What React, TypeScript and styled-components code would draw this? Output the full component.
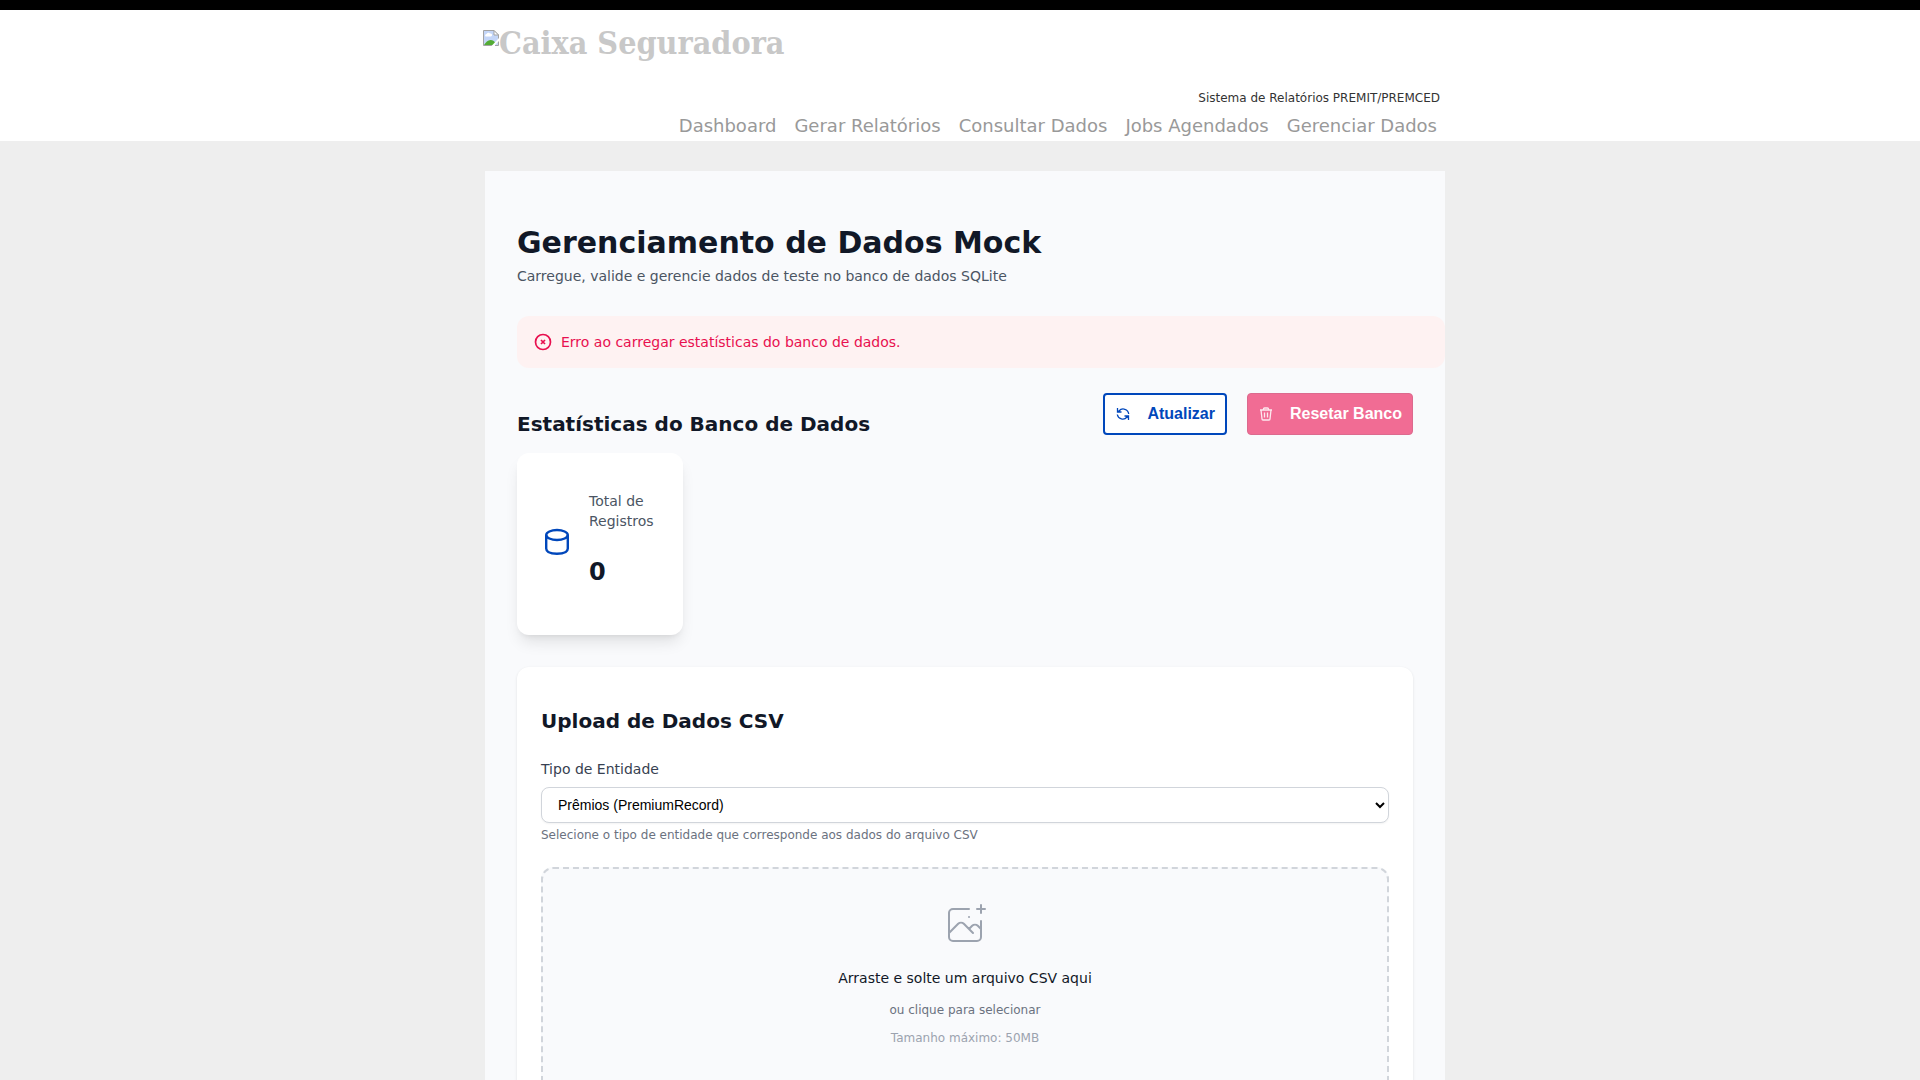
import React from "react";
import styled, { createGlobalStyle } from "styled-components";

const sans = '"DejaVu Sans", Verdana, sans-serif';
const arial = '"Liberation Sans", Arial, sans-serif';

const GlobalStyle = createGlobalStyle`
  * { box-sizing: border-box; }
  body { margin: 0; background: #eeeeee; color: #111827; font-family: ${sans}; font-size: 14px; line-height: 20px; }
  h1, h2, p { margin: 0; }
`;

const Header = styled.header`
  background: #ffffff;
  border-top: 10px solid #000000;
`;

const HeaderInner = styled.div`
  max-width: 960px;
  margin: 0 auto;
  padding: 16px 0 2px 3px;
  display: flex;
  flex-direction: column;
`;

const Logo = styled.a`
  display: flex;
  align-items: flex-start;
  align-self: flex-start;
  height: 56px;
  color: #c8c8c8;
  font: bold 32px/34px "DejaVu Serif Condensed", "DejaVu Serif", serif;
  text-decoration: none;

  svg { margin-top: 4px; flex: none; }
`;

const SystemName = styled.p`
  align-self: flex-end;
  color: #333333;
  font-size: 12px;
  line-height: 16px;
  margin: 8px 0 0;
`;

const Nav = styled.nav`
  display: flex;
  align-self: flex-end;
  gap: 18px;
  padding: 6px 3px 0 0;

  a { color: #999999; font-size: 18px; line-height: 27px; text-decoration: none; white-space: nowrap; }
`;

const Main = styled.main`
  max-width: 970px;
  margin: 30px auto 0;
  padding-left: 10px;
`;

const Page = styled.div`
  background: #f9fafc;
  padding: 52px 32px 32px;
`;

const Title = styled.h1`
  font-size: 30px;
  line-height: 40px;
`;

const Subtitle = styled.p`
  color: #4b5563;
  margin-top: 3px;
`;

const Alert = styled.div`
  display: flex;
  align-items: center;
  gap: 8px;
  margin: 30px -32px 0 0;
  padding: 16px;
  border-radius: 12px;
  background: #fef2f2;
  color: #e8104f;
`;

const StatsHeader = styled.div`
  display: flex;
  justify-content: space-between;
  align-items: flex-start;
  margin-top: 25px;
`;

const SectionTitle = styled.h2`
  font-size: 20px;
  line-height: 28px;
`;

const StatsTitle = styled(SectionTitle)`
  padding-top: 17px;
`;

const Actions = styled.div`
  display: flex;
  gap: 20px;
`;

const Button = styled.button<{ $danger?: boolean }>`
  display: flex;
  align-items: center;
  gap: 16px;
  height: 42px;
  padding: 0 10px;
  border: ${(p) => (p.$danger ? "1px solid #dc6a8e" : "2px solid #0047bb")};
  border-radius: 4px;
  background: ${(p) => (p.$danger ? "#f16c94" : "#ffffff")};
  color: ${(p) => (p.$danger ? "#ffffff" : "#0047bb")};
  font: bold 16px/20px ${arial};
`;

const StatsGrid = styled.div`
  display: grid;
  grid-template-columns: repeat(5, 1fr);
  gap: 16px;
  margin-top: 15px;
`;

const StatCard = styled.section`
  display: flex;
  align-items: center;
  gap: 16px;
  padding: 38px 24px 47px;
  border-radius: 12px;
  background: #ffffff;
  box-shadow: 0 10px 15px -3px rgba(0, 0, 0, 0.1), 0 4px 6px -4px rgba(0, 0, 0, 0.1);

  svg { flex: none; margin-top: 4px; }
`;

const StatLabel = styled.p`
  color: #4b5563;
`;

const StatValue = styled.p`
  margin-top: 25px;
  font-size: 24px;
  font-weight: bold;
  line-height: 32px;
`;

const UploadCard = styled.section`
  margin-top: 32px;
  padding: 40px 24px 24px;
  border-radius: 12px;
  background: #ffffff;
  box-shadow: 0 1px 3px rgba(0, 0, 0, 0.1);
`;

const Label = styled.label`
  display: block;
  margin-top: 24px;
  color: #374151;
`;

const Select = styled.select`
  display: block;
  width: 100%;
  height: 36px;
  margin-top: 8px;
  padding: 0 12px;
  border: 1px solid #d1d5db;
  border-radius: 8px;
  background: #ffffff;
  color: #000000;
  font: 14px ${arial};
  box-shadow: 0 1px 2px rgba(0, 0, 0, 0.05);
`;

const Hint = styled.p`
  margin-top: 4px;
  color: #6b7280;
  font-size: 12px;
  line-height: 16px;
`;

const DropZone = styled.button`
  display: flex;
  flex-direction: column;
  align-items: center;
  width: 100%;
  margin-top: 24px;
  padding: 32px 32px 48px;
  border: 2px dashed #d1d5db;
  border-radius: 12px;
  background: #f9fafc;
  font-family: ${sans};
`;

const DropTitle = styled.span`
  margin: 19px 0 2px;
  color: #111827;
  font-size: 14px;
  line-height: 20px;
`;

const DropText = styled.span<{ $muted?: boolean }>`
  margin-top: 12px;
  color: ${(p) => (p.$muted ? "#9ca3af" : "#6b7280")};
  font-size: 12px;
  line-height: 16px;
`;

const BrokenImage = () => (
  <svg width="16" height="16" viewBox="0 0 16 16" aria-hidden="true">
    <path d="M0.5 0.5H11L15.5 5V15.5H0.5Z" fill="#c4d6f8" stroke="#a3a3a3" />
    <path d="M11 0.5V5H15.5Z" fill="#fff" stroke="#a3a3a3" />
    <path d="M2.500 6.500a1.500 1.500 0 0 1 1-2.500a2 2 0 0 1 3.500-.5a1.500 1.500 0 0 1 1 3Z" fill="#fff" />
    <path d="M1 15c1.500-2.500 4-5 6.500-5s3.500 1 4.500 2.500V15Z" fill="#53ac35" />
    <path d="M8.500 16L16 8V11L12 15V16Z" fill="#fff" />
  </svg>
);

const ErrorIcon = () => (
  <svg width="20" height="20" viewBox="0 0 20 20" fill="none" stroke="currentColor" strokeWidth="1.700" aria-hidden="true">
    <circle cx="10" cy="10" r="7.500" />
    <path d="M8 8l4 4M12 8l-4 4" />
  </svg>
);

const RefreshIcon = () => (
  <svg width="16" height="16" viewBox="0 0 16 16" fill="none" stroke="currentColor" strokeWidth="1.300" aria-hidden="true">
    <path d="M2.500 2V6H6.500M13.500 14V10H9.500M4 5A5.500 5.500 0 0 1 13.700 8M12 11A5.500 5.500 0 0 1 2.300 8.500" />
    <path d="M2.500 3.500V6H5ZM13.500 13V10H10.500Z" fill="currentColor" stroke="none" />
  </svg>
);

const TrashIcon = () => (
  <svg width="16" height="16" viewBox="0 0 16 16" fill="none" stroke="currentColor" strokeWidth="1.300" strokeOpacity="0.850" aria-hidden="true">
    <path d="M2 4H14M5.500 4V3A1 1 0 0 1 6.500 2H9.500A1 1 0 0 1 10.500 3V4M3 4L4 13A1 1 0 0 0 5 14H11A1 1 0 0 0 12 13L13 4M6.500 6.500V11.500M9.500 6.500V11.500" />
  </svg>
);

const DatabaseIcon = () => (
  <svg width="32" height="32" viewBox="0 0 32 32" fill="none" stroke="#0047bb" strokeWidth="2.400" aria-hidden="true">
    <ellipse cx="16" cy="9" rx="10.800" ry="5" />
    <path d="M5.200 9V22.500C5.200 26 10 27.800 16 27.800S26.800 26 26.800 22.500V9" />
  </svg>
);

const PhotoAddIcon = () => (
  <svg width="48" height="48" viewBox="0 0 48 48" fill="none" stroke="#9ca3af" strokeWidth="2" strokeLinecap="round" strokeLinejoin="round" aria-hidden="true">
    <path d="M28 8H12a4 4 0 00-4 4v20m32-12v8m0 0v8a4 4 0 01-4 4H12a4 4 0 01-4-4v-4m32-4l-3.172-3.172a4 4 0 00-5.656 0L28 28M8 32l9.172-9.172a4 4 0 015.656 0L28 28m0 0l4 4m4-24h8m-4-4v8m-12 4h.02" />
  </svg>
);

const links = ["Dashboard", "Gerar Relatórios", "Consultar Dados", "Jobs Agendados", "Gerenciar Dados"];

export default function App() {
  return (
    <>
      <GlobalStyle />
      <Header>
        <HeaderInner>
          <Logo href="#"><BrokenImage />Caixa Seguradora</Logo>
          <SystemName>Sistema de Relatórios PREMIT/PREMCED</SystemName>
          <Nav>{links.map((l) => <a key={l} href="#">{l}</a>)}</Nav>
        </HeaderInner>
      </Header>
      <Main>
        <Page>
          <Title>Gerenciamento de Dados Mock</Title>
          <Subtitle>Carregue, valide e gerencie dados de teste no banco de dados SQLite</Subtitle>
          <Alert role="alert"><ErrorIcon />Erro ao carregar estatísticas do banco de dados.</Alert>
          <StatsHeader>
            <StatsTitle>Estatísticas do Banco de Dados</StatsTitle>
            <Actions>
              <Button type="button"><RefreshIcon />Atualizar</Button>
              <Button type="button" $danger disabled><TrashIcon />Resetar Banco</Button>
            </Actions>
          </StatsHeader>
          <StatsGrid>
            <StatCard>
              <DatabaseIcon />
              <div>
                <StatLabel>Total de Registros</StatLabel>
                <StatValue>0</StatValue>
              </div>
            </StatCard>
          </StatsGrid>
          <UploadCard>
            <SectionTitle>Upload de Dados CSV</SectionTitle>
            <Label htmlFor="entity">Tipo de Entidade</Label>
            <Select id="entity"><option>Prêmios (PremiumRecord)</option></Select>
            <Hint>Selecione o tipo de entidade que corresponde aos dados do arquivo CSV</Hint>
            <DropZone type="button">
              <PhotoAddIcon />
              <DropTitle>Arraste e solte um arquivo CSV aqui</DropTitle>
              <DropText>ou clique para selecionar</DropText>
              <DropText $muted>Tamanho máximo: 50MB</DropText>
            </DropZone>
          </UploadCard>
        </Page>
      </Main>
    </>
  );
}
